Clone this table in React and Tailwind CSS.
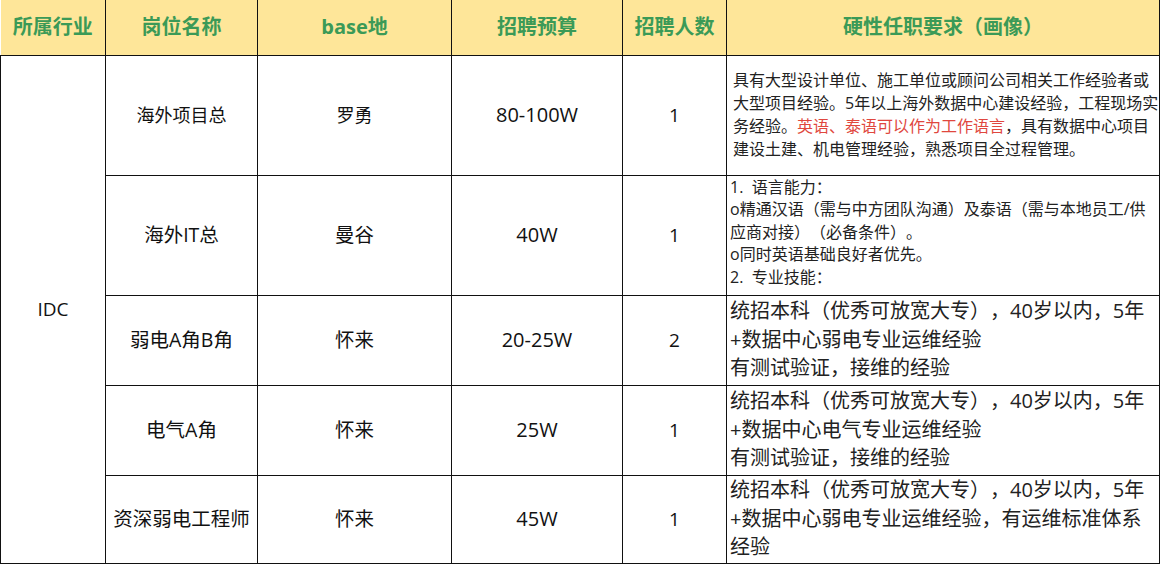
const font = "font-['Open_Sans','Noto_Sans_CJK_SC',sans-serif] [text-spacing-trim:space-all]";

const headers = ["所属行业", "岗位名称", "base地", "招聘预算", "招聘人数", "硬性任职要求（画像）"];

const rows = [
  {
    title: "海外项目总",
    base: "罗勇",
    budget: "80-100W",
    count: "1",
    h: "h-[120px]",
    size: "text-[18px]",
    req: (
      <div className="pl-[6px] pr-1 text-[16px] leading-[23px] text-[#222]">
        <div className="whitespace-nowrap">具有大型设计单位、施工单位或顾问公司相关工作经验者或</div>
        <div className="whitespace-nowrap">大型项目经验。5年以上海外数据中心建设经验，工程现场实</div>
        <div className="whitespace-nowrap">
          务经验。<span className="text-[#e0473e]">英语、泰语可以作为工作语言</span>，具有数据中心项目
        </div>
        <div className="whitespace-nowrap">建设土建、机电管理经验，熟悉项目全过程管理。</div>
      </div>
    ),
  },
  {
    title: "海外IT总",
    base: "曼谷",
    budget: "40W",
    count: "1",
    h: "h-[120px]",
    size: "text-[19.5px]",
    top: true,
    req: (
      <div className="h-[119px] overflow-hidden pl-[3px] text-[16px] leading-[22.5px] text-[#222]">
        <div className="whitespace-nowrap">1.&nbsp;&nbsp;语言能力：</div>
        <div className="whitespace-nowrap">o精通汉语（需与中方团队沟通）及泰语（需与本地员工/供</div>
        <div className="whitespace-nowrap">应商对接）（必备条件）。</div>
        <div className="whitespace-nowrap">o同时英语基础良好者优先。</div>
        <div className="whitespace-nowrap">2.&nbsp;&nbsp;专业技能：</div>
      </div>
    ),
  },
  {
    title: "弱电A角B角",
    base: "怀来",
    budget: "20-25W",
    count: "2",
    h: "h-[90px]",
    size: "text-[19.5px]",
    req: (
      <div className="pl-[3px] text-[20px] leading-[28.5px] text-[#222]">
        <div className="whitespace-nowrap">统招本科（优秀可放宽大专），40岁以内，5年</div>
        <div className="whitespace-nowrap">+数据中心弱电专业运维经验</div>
        <div className="whitespace-nowrap">有测试验证，接维的经验</div>
      </div>
    ),
  },
  {
    title: "电气A角",
    base: "怀来",
    budget: "25W",
    count: "1",
    h: "h-[90px]",
    size: "text-[19.5px]",
    req: (
      <div className="pl-[3px] text-[20px] leading-[28.5px] text-[#222]">
        <div className="whitespace-nowrap">统招本科（优秀可放宽大专），40岁以内，5年</div>
        <div className="whitespace-nowrap">+数据中心电气专业运维经验</div>
        <div className="whitespace-nowrap">有测试验证，接维的经验</div>
      </div>
    ),
  },
  {
    title: "资深弱电工程师",
    base: "怀来",
    budget: "45W",
    count: "1",
    h: "h-[88px]",
    size: "text-[19.5px]",
    req: (
      <div className="pl-[3px] text-[20px] leading-[28.5px] text-[#222]">
        <div className="whitespace-nowrap">统招本科（优秀可放宽大专），40岁以内，5年</div>
        <div className="whitespace-nowrap">+数据中心弱电专业运维经验，有运维标准体系</div>
        <div className="whitespace-nowrap">经验</div>
      </div>
    ),
  },
];

export default function App() {
  return (
    <div className={`w-[1160px] h-[565px] overflow-hidden bg-white ${font}`}>
      <table className="w-[1159px] table-fixed border-collapse">
        <colgroup>
          <col className="w-[105px]" />
          <col className="w-[152px]" />
          <col className="w-[194px]" />
          <col className="w-[171px]" />
          <col className="w-[104px]" />
          <col className="w-[433px]" />
        </colgroup>
        <thead>
          <tr className="h-[55px] bg-[#fee699]">
            {headers.map((h, i) => (
              <th
                key={i}
                className={`border-b border-[#111] p-0 text-center text-[20px] font-bold text-[#3b9a57] ${
                  i > 0 ? "border-l" : ""
                } ${i === 5 ? "border-r" : ""}`}
              >
                {h}
              </th>
            ))}
          </tr>
        </thead>
        <tbody>
          {rows.map((r, i) => (
            <tr key={i} className={r.h}>
              {i === 0 && (
                <td
                  rowSpan={5}
                  className="border border-[#111] p-0 text-center align-middle text-[19px] text-[#111]"
                >
                  IDC
                </td>
              )}
              <td className={`border border-[#111] p-0 text-center text-[#111] whitespace-nowrap ${r.size}`}>
                {r.title}
              </td>
              <td className={`border border-[#111] p-0 text-center text-[#111] ${r.size}`}>{r.base}</td>
              <td className="border border-[#111] p-0 text-center text-[20px] text-[#111]">{r.budget}</td>
              <td className="border border-[#111] p-0 text-center text-[19px] text-[#111]">{r.count}</td>
              <td className={`border border-[#111] p-0 text-left ${r.top ? "align-top" : "align-middle"}`}>
                {r.req}
              </td>
            </tr>
          ))}
        </tbody>
      </table>
    </div>
  );
}
